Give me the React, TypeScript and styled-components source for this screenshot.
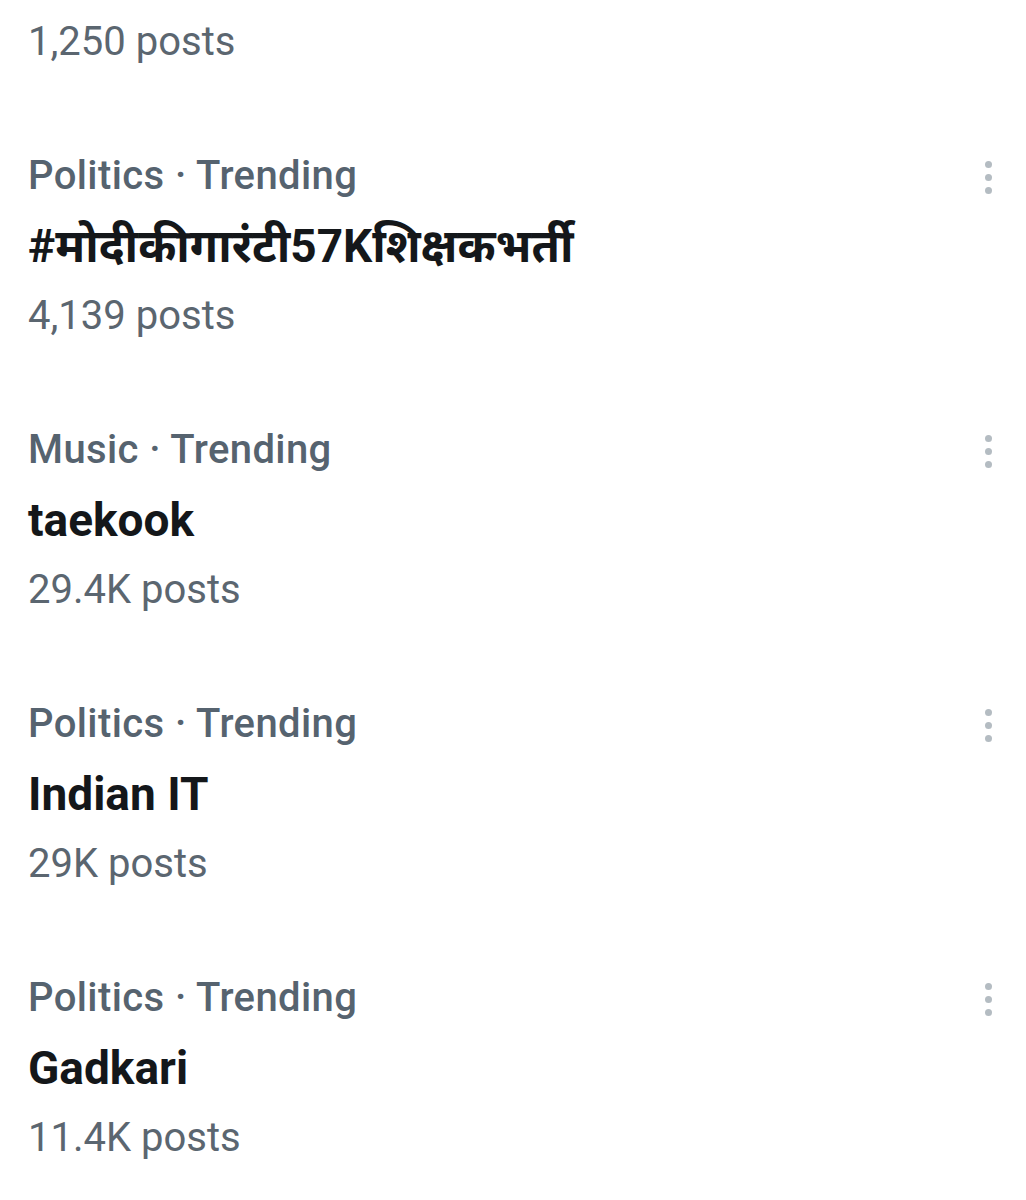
import React from "react";
import styled, { createGlobalStyle } from "styled-components";

const Global = createGlobalStyle`
  html, body { margin: 0; padding: 0; background: #fff; }
  body { font-family: Roboto, "Noto Sans", "DejaVu Sans", sans-serif; -webkit-font-smoothing: antialiased; }
`;

const List = styled.div`
  display: flex;
  flex-direction: column;
  gap: 64px;
  padding: 7px 0 0 0;
  width: 1026px;
`;

const Item = styled.div`
  position: relative;
  display: flex;
  flex-direction: column;
  padding-left: 28px;
  padding-right: 30px;
`;

const Meta = styled.div`
  font-size: 40px;
  line-height: 70px;
  font-weight: 500;
  letter-spacing: 0.4px;
  color: #56636f;
`;

const Title = styled.div`
  font-size: 46px;
  line-height: 70px;
  font-weight: 700;
  color: #14171a;
`;

const Posts = styled.div`
  font-size: 40px;
  line-height: 70px;
  font-weight: 400;
  color: #5b6670;
`;

const More = styled.div`
  position: absolute;
  right: 34px;
  top: 20px;
  display: flex;
  flex-direction: column;
  gap: 6px;
`;

const Dot = styled.span`
  width: 7px;
  height: 7px;
  border-radius: 50%;
  background: #b4bcc2;
`;

const trends = [
  { meta: "Politics · Trending", title: "#मोदीकीगारंटी57Kशिक्षकभर्ती", posts: "4,139 posts" },
  { meta: "Music · Trending", title: "taekook", posts: "29.4K posts" },
  { meta: "Politics · Trending", title: "Indian IT", posts: "29K posts" },
  { meta: "Politics · Trending", title: "Gadkari", posts: "11.4K posts" },
];

export default function App() {
  return (
    <>
      <Global />
      <List>
        <Item>
          <Posts>1,250 posts</Posts>
        </Item>
        {trends.map((t, i) => (
          <Item key={i}>
            <Meta>{t.meta}</Meta>
            <Title>{t.title}</Title>
            <Posts>{t.posts}</Posts>
            <More>
              <Dot />
              <Dot />
              <Dot />
            </More>
          </Item>
        ))}
      </List>
    </>
  );
}
